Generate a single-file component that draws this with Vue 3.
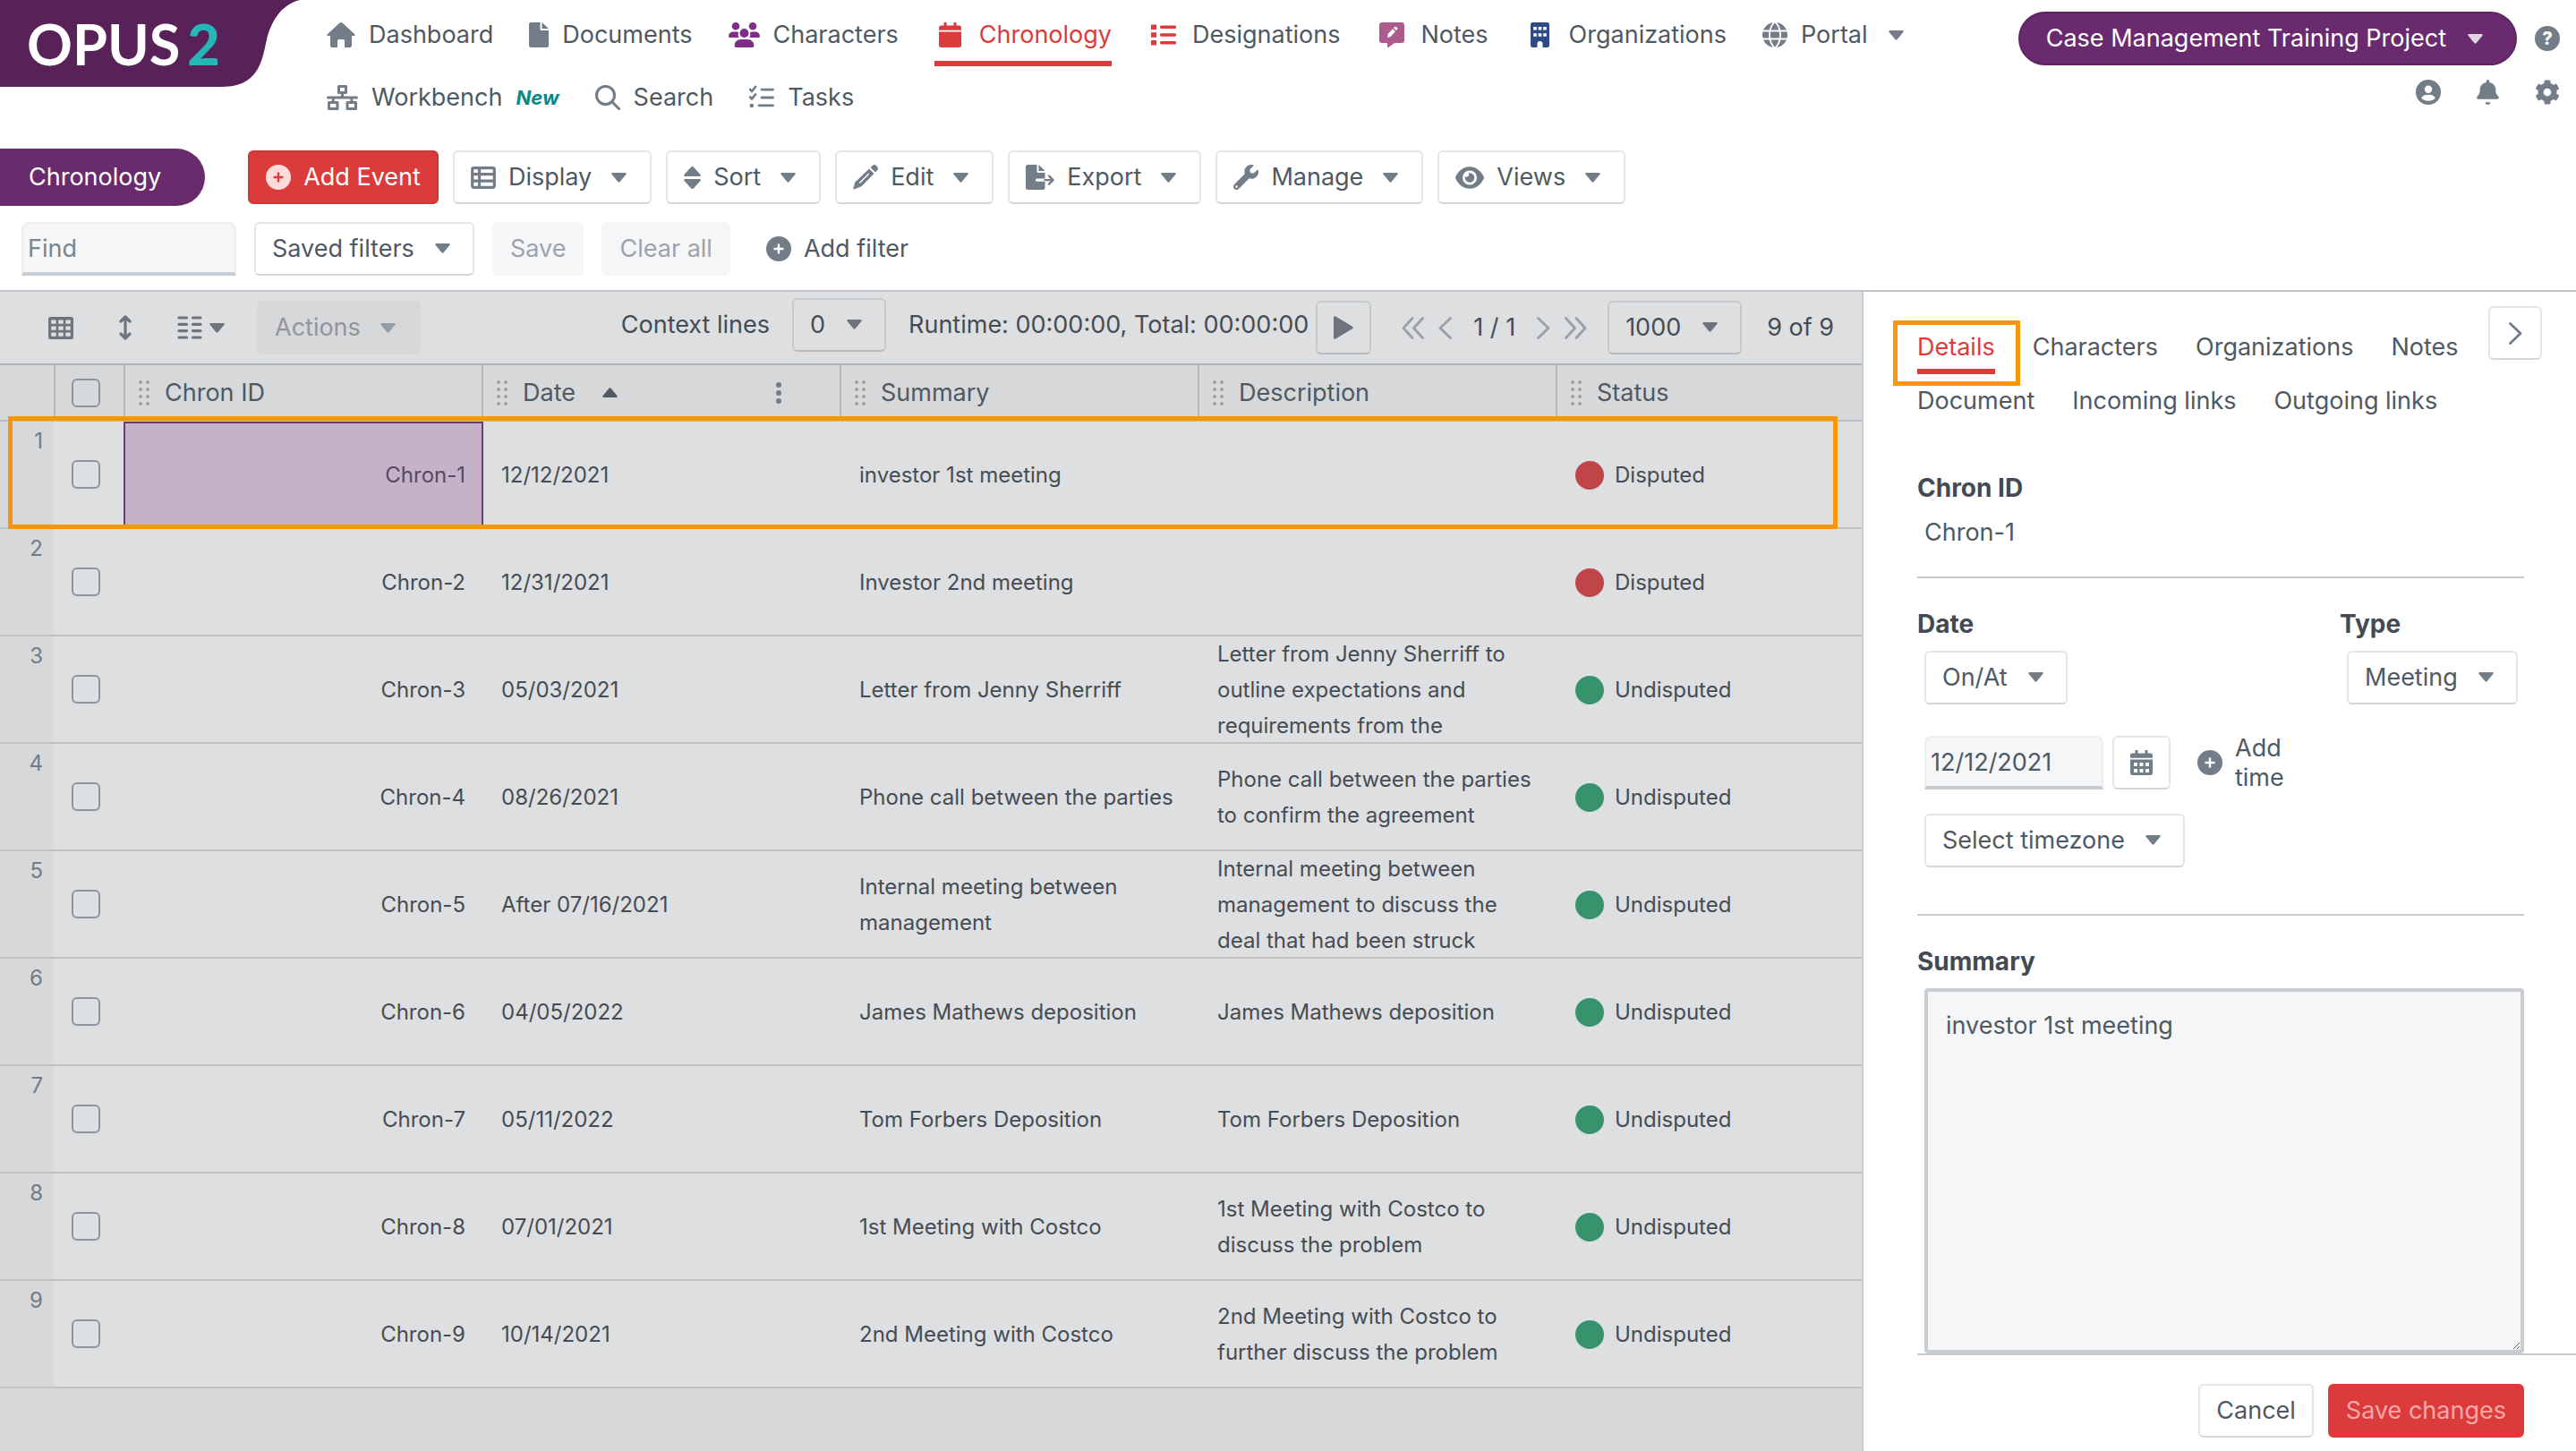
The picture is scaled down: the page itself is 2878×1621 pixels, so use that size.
<template>
	<div class="page">
		<header class="top">
			<a class="logo" href="#" aria-label="Opus 2">
				<svg class="logoShape" viewBox="0 0 335 97" preserveAspectRatio="none" aria-hidden="true">
					<path d="M0 0H335C314 5 303 24 298 44C293 66 290 97 248 97H0z" />
				</svg>
				<span class="logoText">OPUS<b>2</b></span>
			</a>

			<nav class="mainNav">
				<a v-for="item in navItems" :key="item.label" href="#" :class="['navItem', { active: item.active }]">
					<span :class="['navIcon', item.tone, { wide: item.wide }]"><Icon :name="item.icon" /></span>
					<span>{{ item.label }}</span>
					<em v-if="item.isNew">New</em>
					<Icon v-if="item.menu" name="caret" class="navCaret" />
				</a>
			</nav>

			<div class="account">
				<div class="accountRow">
					<button type="button" class="project">Case Management Training Project<Icon name="caret" /></button>
					<button type="button" class="help" aria-label="Help">?</button>
				</div>
				<div class="accountRow small">
					<button type="button" class="plain" aria-label="Account"><Icon name="user" /></button>
					<button type="button" class="plain" aria-label="Notifications"><Icon name="bell" /></button>
					<button type="button" class="plain" aria-label="Settings"><Icon name="gear" /></button>
				</div>
			</div>
		</header>

		<div class="toolbar">
			<h1 class="pageTitle">Chronology</h1>
			<button type="button" class="btn primary"><Icon name="plus" />Add Event</button>
			<button v-for="tool in tools" :key="tool.label" type="button" class="btn menu">
				<Icon :name="tool.icon" />{{ tool.label }}<Icon name="caret" class="caret" />
			</button>
		</div>

		<div class="filters">
			<input v-model="find" class="field find" type="text" placeholder="Find" aria-label="Find" />
			<span class="selectBox">
				<select aria-label="Saved filters"><option>Saved filters</option></select>
				<Icon name="caret" class="selectCaret" />
			</span>
			<button type="button" class="btn" disabled>Save</button>
			<button type="button" class="btn" disabled>Clear all</button>
			<button type="button" class="plain addFilter"><Icon name="plus" />Add filter</button>
		</div>

		<main class="content">
			<section class="list">
				<div class="listBar">
					<button type="button" class="plain" aria-label="Grid"><Icon name="grid" /></button>
					<button type="button" class="plain heightBtn" aria-label="Row height"><Icon name="updown" /></button>
					<button type="button" class="plain columnsBtn" aria-label="Columns"><Icon name="columns" /><Icon name="caret" /></button>
					<button type="button" class="btn menu actions" disabled>Actions<Icon name="caret" class="caret" /></button>
					<div class="barRight">
						<div class="runtime">
							<label for="context">Context lines</label>
							<span class="selectBox context">
								<select id="context"><option>0</option></select>
								<Icon name="caret" class="selectCaret" />
							</span>
							<span>Runtime: 00:00:00, Total: 00:00:00</span>
						</div>
						<button type="button" class="btn play" aria-label="Play"><Icon name="play" /></button>
						<div class="pager">
							<button type="button" class="plain" aria-label="First page"><Icon name="first" /></button>
							<button type="button" class="plain" aria-label="Previous page"><Icon name="prev" /></button>
							<span class="pageNo">1 / 1</span>
							<button type="button" class="plain" aria-label="Next page"><Icon name="next" /></button>
							<button type="button" class="plain" aria-label="Last page"><Icon name="last" /></button>
						</div>
						<span class="selectBox">
							<select aria-label="Rows per page"><option>1000</option></select>
							<Icon name="caret" class="selectCaret" />
						</span>
						<span class="total">9 of 9</span>
					</div>
				</div>

				<div class="tableWrap">
					<table>
						<colgroup>
							<col class="colNo" />
							<col class="colCheck" />
							<col v-for="n in 4" :key="n" class="colData" />
							<col />
						</colgroup>
						<thead>
							<tr>
								<th></th>
								<th><input type="checkbox" aria-label="Select all" /></th>
								<th v-for="col in columns" :key="col">
									<div class="head">
										<Icon name="handle" />
										<span>{{ col }}</span>
										<template v-if="col === 'Date'">
											<Icon name="asc" class="asc" />
											<button type="button" class="plain dots" aria-label="Column menu"><Icon name="dots" /></button>
										</template>
									</div>
								</th>
							</tr>
						</thead>
						<tbody>
							<tr v-for="(row, i) in rows" :key="i">
								<td class="no">{{ i + 1 }}</td>
								<td class="check"><input type="checkbox" :aria-label="`Select Chron-${i + 1}`" /></td>
								<td :class="['chron', { selected: i === 0 }]">Chron-{{ i + 1 }}</td>
								<td>{{ row.date }}</td>
								<td>{{ row.summary }}</td>
								<td>{{ row.description }}</td>
								<td>
									<span class="status">
										<i :class="{ disputed: row.disputed }"></i>{{ row.disputed ? 'Disputed' : 'Undisputed' }}
									</span>
								</td>
							</tr>
						</tbody>
					</table>
					<div class="rowMark"></div>
				</div>
			</section>

			<aside class="panel">
				<div class="panelTop">
					<nav class="tabs">
						<a v-for="tab in tabs" :key="tab" href="#" :class="{ active: tab === 'Details' }">{{ tab }}</a>
					</nav>
					<button type="button" class="btn collapse" aria-label="Collapse panel"><Icon name="next" /></button>
				</div>

				<form class="details" @submit.prevent>
					<section class="group">
						<h2>Chron ID</h2>
						<p>Chron-1</p>
					</section>

					<section class="group dates">
						<div class="dateCol">
							<h2>Date</h2>
							<span class="selectBox">
								<select aria-label="Date precision"><option>On/At</option></select>
								<Icon name="caret" class="selectCaret" />
							</span>
							<div class="dateRow">
								<input v-model="date" class="field" type="text" aria-label="Date" />
								<button type="button" class="btn cal" aria-label="Open calendar"><Icon name="calendarDays" /></button>
								<button type="button" class="plain addTime"><Icon name="plus" /><span>Add time</span></button>
							</div>
							<span class="selectBox">
								<select aria-label="Timezone"><option>Select timezone</option></select>
								<Icon name="caret" class="selectCaret" />
							</span>
						</div>
						<div>
							<h2><label for="type">Type</label></h2>
							<span class="selectBox">
								<select id="type"><option>Meeting</option></select>
								<Icon name="caret" class="selectCaret" />
							</span>
						</div>
					</section>

					<section class="group summary">
						<h2><label for="summary">Summary</label></h2>
						<textarea id="summary" v-model="summary"></textarea>
					</section>
				</form>

				<footer class="panelFoot">
					<button type="button" class="btn">Cancel</button>
					<button type="button" class="btn primary faded">Save changes</button>
				</footer>
			</aside>
		</main>
	</div>
</template>

<script setup>
import { h, ref } from 'vue'

const dot = (x, y, r) => `M${x - r} ${y}a${r} ${r} 0 1 0 ${2 * r} 0a${r} ${r} 0 1 0 ${-2 * r} 0z`
const box = (x, y, w, hgt) => `M${x} ${y}h${w}v${hgt}h${-w}z`

// w, h: drawn size / fill: solid shape / line: stroked shape / cut: white lines
const icons = {
	home: { w: 32, h: 28, fill: 'M16 0Q17 0 18 1L31 13Q32.5 15 30.5 15H28V26a2 2 0 0 1-2 2H20V21q0-2-2-2h-4q-2 0-2 2v7H6a2 2 0 0 1-2-2V15H1.5Q-.5 15 1 13L14 1Q15 0 16 0z' },
	file: { w: 22, h: 28, fill: 'M2.5 0H12.5V7.5a1.5 1.5 0 0 0 1.5 1.5H22V25.5a2.5 2.5 0 0 1-2.5 2.5h-17A2.5 2.5 0 0 1 0 25.5v-23A2.5 2.5 0 0 1 2.5 0zM14.5 0L22 7H14.5z' },
	users: { w: 35, h: 28, fill: dot(8, 4.3, 4.3) + dot(27, 4.3, 4.3) + dot(17.5, 12, 5) + 'M0 15.5a5 5 0 0 1 5-5h4q1 0 2 .6q-1 3 .4 5.9H1.5q-1.5 0-1.5-1.5zM35 15.5a5 5 0 0 0-5-5h-4q-1 0-2 .6q1 3-.4 5.9h9.9q1.5 0 1.5-1.5zM6.5 26a7 7 0 0 1 7-7h8a7 7 0 0 1 7 7q0 2-2 2h-18q-2 0-2-2z' },
	calendar: { w: 25, h: 28, fill: 'M5.5 0h3v3.5h8V0h3v3.5h3A2.5 2.5 0 0 1 25 6v2.8H0V6a2.5 2.5 0 0 1 2.5-2.5h3zM0 10.5h25v15a2.5 2.5 0 0 1-2.5 2.5h-20A2.5 2.5 0 0 1 0 25.5z' },
	calendarDays: { w: 25, h: 28, fill: 'M5.5 0h3v3.5h8V0h3v3.5h3A2.5 2.5 0 0 1 25 6v2.8H0V6a2.5 2.5 0 0 1 2.5-2.5h3zM0 10.5h25v15a2.5 2.5 0 0 1-2.5 2.5h-20A2.5 2.5 0 0 1 0 25.5z' + [4, 10.5, 17].map((x) => box(x, 14, 4, 4) + box(x, 21, 4, 4)).join('') },
	list: { w: 28, h: 28, fill: box(0, 2.5, 6, 5.5) + box(0, 11.2, 6, 5.5) + box(0, 20, 6, 5.5), line: 'M11.5 5.2H26.5M11.5 14H26.5M11.5 22.8H26.5', sw: 3.4 },
	tasks: { w: 28, h: 28, fill: dot(2.8, 23, 2.3), line: 'M1 5l2 2L7 2M1 13.5l2 2L7 10.5M14 5.2H26.5M14 14H26.5M11 22.8H26.5', sw: 2.8 },
	note: { w: 28, h: 28, fill: 'M3 0H25a3 3 0 0 1 3 3V20a3 3 0 0 1-3 3H17L10.5 27.8Q9 28.5 9 27V23H3a3 3 0 0 1-3-3V3a3 3 0 0 1 3-3zM9 17L12.5 16L18 10L15 7.2L9.8 12.8zM16 6.2L19 9L20 7.8Q20.8 6.5 19.8 5.6T17.2 5z' },
	building: { w: 21, h: 28, fill: 'M2.5 0h16A2.5 2.5 0 0 1 21 2.5v23a2.5 2.5 0 0 1-2.5 2.5H13.5v-4a3 3 0 0 0-6 0v4h-5A2.5 2.5 0 0 1 0 25.5v-23A2.5 2.5 0 0 1 2.5 0z' + [3.2, 8.7, 14.2].map((x) => box(x, 5, 3.6, 3.6) + box(x, 12.2, 3.6, 3.6)).join('') },
	globe: { w: 28, h: 28, fill: dot(14, 14, 14), cut: 'M0 9.5H28M0 18.5H28M14 -1C6 7 6 21 14 29M14 -1C22 7 22 21 14 29' },
	sitemap: { w: 35, h: 28, line: 'M13.5 1.5h8v7h-8zM2.5 19.5h9.5v7H2.5zM23 19.5h9.5v7H23zM17.5 8.5V14M1.5 14H33.5M7.2 14V19.5M27.8 14V19.5', sw: 3 },
	search: { w: 28, h: 28, line: 'M21.5 11.5a10 10 0 1 1-20 0a10 10 0 1 1 20 0zM18.8 18.8L26.5 26.5', sw: 3 },
	caret: { w: 17, h: 11, fill: 'M1.5 0H15.5Q17.5 .3 16.3 2L9.7 10Q8.5 11.4 7.3 10L.7 2Q-.5 .3 1.5 0z' },
	plus: { w: 28, h: 28, fill: dot(14, 14, 14) + 'M12.8 8.5h2.4v4.3h4.3v2.4h-4.3v4.3h-2.4v-4.3H8.5v-2.4h4.3z' },
	display: { w: 28, h: 25, line: 'M3.5 1.7h21q1.8 0 1.8 1.8v18q0 1.8-1.8 1.8h-21q-1.8 0-1.8-1.8v-18q0-1.8 1.8-1.8zM9.5 2V23M2 8.7H26M2 16.2H26', sw: 3.2 },
	sort: { w: 19, h: 25, fill: 'M9.5 0Q10.5 0 11 .8L18.5 9Q19.5 11 17.5 11H1.5Q-.5 11 .5 9L8 .8Q8.5 0 9.5 0zM9.5 25Q10.5 25 11 24.2L18.5 16Q19.5 14 17.5 14H1.5Q-.5 14 .5 16L8 24.2Q8.5 25 9.5 25z' },
	pencil: { w: 28, h: 28, fill: 'M19.5 3L22 .9Q24 -.7 26 1L27.2 2.4Q28.8 4.5 27 6.3L25 8.5zM18 4.6L23.5 10.1L9.5 24.2L1.2 27.6Q0 28 .3 26.6L2.6 18.8L4 18zM17.2 9.6L6.8 20L7.8 21L18.2 10.6z' },
	fileExport: { w: 32, h: 28, fill: 'M2.5 0H12.5V7.5a1.5 1.5 0 0 0 1.5 1.5H21.5V15.5H12.5a1.6 1.6 0 0 0 0 3.2h9V25.5a2.5 2.5 0 0 1-2.5 2.5H2.5A2.5 2.5 0 0 1 0 25.5v-23A2.5 2.5 0 0 1 2.5 0zM14.5 0L21.5 7H14.5z', line: 'M21.5 17.1H30M26 12.5L30.5 17.1L26 21.7', sw: 2.4 },
	wrench: { w: 28, h: 28, box: '0 0 512 512', fill: 'M507.7 109.1c-2.2-9-13.5-12.1-20.1-5.5l-74.4 74.4-67.9-11.3-11.3-67.9 74.4-74.4c6.6-6.6 3.4-17.9-5.7-20.2-47.4-11.7-99.6.9-136.6 37.9-39.6 39.6-50.5 97.1-34 147.2L18.7 402.8c-25 25-25 65.5 0 90.5 25 25 65.5 25 90.5 0l213.2-213.2c50.1 16.7 107.5 5.7 147.4-34.2 37.1-37.1 49.7-89.3 37.9-136.8zM64 472c-13.2 0-24-10.8-24-24 0-13.3 10.8-24 24-24s24 10.7 24 24c0 13.2-10.8 24-24 24z' },
	eye: { w: 32, h: 25, box: '0 32 576 448', fill: 'M572.5 241.4C518.3 115.6 410.9 34 288 34S57.7 115.6 3.5 241.4a32.4 32.4 0 0 0 0 29.2C57.7 396.4 165.1 478 288 478s230.3-81.6 284.5-207.4a32.4 32.4 0 0 0 0-29.2zM288 400a144 144 0 1 1 144-144 144 144 0 0 1-144 144zm0-240a95.3 95.3 0 0 0-25.3 3.8 47.9 47.9 0 0 1-66.9 66.9A95.8 95.8 0 1 0 288 160z' },
	user: { w: 28, h: 28, fill: dot(14, 14, 14) + dot(14, 10.8, 4.2) + 'M6.2 20.5Q8 17 11.5 17h5Q20 17 21.8 20.5A10.8 10.8 0 0 1 6.2 20.5z' },
	bell: { w: 25, h: 28, box: '0 0 448 512', fill: 'M224 512c30 0 50-20 55-50H169c5 30 25 50 55 50zm215.4-169.7c-19.3-20.8-55.5-42-55.5-144.3 0-77.7-54.5-129.9-127.9-145.2V32c0-17.7-14.3-32-32-32s-32 14.3-32 32v20.8C118.6 68.1 64.1 120.3 64.1 198c0 102.3-36.2 123.5-55.5 144.3-6 6.5-8.7 14.2-8.6 21.7.1 16.4 13 32 32.1 32h383.8c19.1 0 32-15.6 32.1-32 0-7.5-2.6-15.3-8.6-21.7z' },
	gear: { w: 28, h: 28, box: '0 0 512 512', fill: 'M487.4 315.7l-42.6-24.6c4.3-23.2 4.3-47 0-70.2l42.6-24.6c4.9-2.8 7.1-8.6 5.5-14-11.1-35.6-30-67.8-54.7-94.6-3.8-4.1-10-5.1-14.8-2.3L380.8 110c-17.9-15.4-38.5-27.3-60.8-35.1V25.8c0-5.6-3.9-10.5-9.4-11.7-36.7-8.2-74.3-7.8-109.2 0-5.5 1.2-9.4 6.1-9.4 11.7V75c-22.2 7.9-42.8 19.8-60.8 35.1L88.7 85.5c-4.9-2.8-11-1.9-14.8 2.3-24.7 26.7-43.6 58.9-54.7 94.6-1.7 5.4.6 11.2 5.5 14L67.3 221c-4.3 23.2-4.3 47 0 70.2l-42.6 24.6c-4.9 2.8-7.1 8.6-5.5 14 11.1 35.6 30 67.8 54.7 94.6 3.8 4.1 10 5.1 14.8 2.3l42.6-24.6c17.9 15.4 38.5 27.3 60.8 35.1v49.2c0 5.6 3.9 10.5 9.4 11.7 36.7 8.2 74.3 7.8 109.2 0 5.5-1.2 9.4-6.1 9.4-11.7v-49.2c22.2-7.9 42.8-19.8 60.8-35.1l42.6 24.6c4.9 2.8 11 1.9 14.8-2.3 24.7-26.7 43.6-58.9 54.7-94.6 1.5-5.5-.7-11.3-5.6-14.1zM256 336c-44.1 0-80-35.9-80-80s35.9-80 80-80 80 35.9 80 80-35.9 80-80 80z' },
	grid: { w: 28, h: 25, fill: 'M2.5 0h23A2.5 2.5 0 0 1 28 2.5v20a2.5 2.5 0 0 1-2.5 2.5h-23A2.5 2.5 0 0 1 0 22.5v-20A2.5 2.5 0 0 1 2.5 0z' + [3.2, 11.3, 19.4].map((x) => box(x, 3.4, 5.4, 4.4) + box(x, 10.4, 5.4, 4.4) + box(x, 17.4, 5.4, 4.4)).join('') },
	updown: { w: 14, h: 28, line: 'M7 2V26M2 7L7 2L12 7M2 21L7 26L12 21', sw: 3.2 },
	columns: { w: 28, h: 26, line: [2, 9.3, 16.6, 24].map((y) => `M2 ${y}H10.5M17.5 ${y}H26`).join(''), sw: 3.2 },
	play: { w: 22, h: 26, fill: 'M0 1.8Q0 -.6 2.2 .6L21 11.8Q22.4 13 21 14.2L2.2 25.4Q0 26.6 0 24.2z' },
	first: { w: 25, h: 25, line: 'M12 1.5L2 12.5L12 23.5M23.5 1.5L13.5 12.5L23.5 23.5', sw: 2.8 },
	prev: { w: 15, h: 25, line: 'M13.5 1.5L2 12.5L13.5 23.5', sw: 2.8 },
	next: { w: 15, h: 25, line: 'M1.5 1.5L13 12.5L1.5 23.5', sw: 2.8 },
	last: { w: 25, h: 25, line: 'M1.5 1.5L11.5 12.5L1.5 23.5M13 1.5L23 12.5L13 23.5', sw: 2.8 },
	handle: { w: 12, h: 28, fill: [2, 10, 18, 26].map((y) => dot(2, y, 2) + dot(10, y, 2)).join('') },
	asc: { w: 17, h: 11, fill: 'M1.5 11H15.5Q17.5 10.7 16.3 9L9.7 1Q8.5 -.4 7.3 1L.7 9Q-.5 10.7 1.5 11z' },
	dots: { w: 6, h: 24, fill: dot(3, 3, 3) + dot(3, 12, 3) + dot(3, 21, 3) },
}

const Icon = ({ name }) => {
	const icon = icons[name]
	return h('svg', { class: 'icon', width: icon.w, height: icon.h, viewBox: icon.box || `0 0 ${icon.w} ${icon.h}`, 'aria-hidden': 'true' }, [
		icon.fill && h('path', { d: icon.fill, fill: 'currentColor', 'fill-rule': 'evenodd' }),
		icon.line && h('path', { d: icon.line, fill: 'none', stroke: 'currentColor', 'stroke-width': icon.sw, 'stroke-linecap': 'round', 'stroke-linejoin': 'round' }),
		icon.cut && h('path', { d: icon.cut, fill: 'none', stroke: '#fff', 'stroke-width': 1.8 }),
	])
}
Icon.props = ['name']

const navItems = [
	{ label: 'Dashboard', icon: 'home' },
	{ label: 'Documents', icon: 'file' },
	{ label: 'Characters', icon: 'users', tone: 'purple' },
	{ label: 'Chronology', icon: 'calendar', tone: 'red', wide: true, active: true },
	{ label: 'Designations', icon: 'list', tone: 'red', wide: true },
	{ label: 'Notes', icon: 'note', tone: 'pink', wide: true },
	{ label: 'Organizations', icon: 'building', tone: 'blue', wide: true },
	{ label: 'Portal', icon: 'globe', menu: true },
	{ label: 'Workbench', icon: 'sitemap', isNew: true },
	{ label: 'Search', icon: 'search' },
	{ label: 'Tasks', icon: 'tasks' },
]

const tools = [
	{ label: 'Display', icon: 'display' },
	{ label: 'Sort', icon: 'sort' },
	{ label: 'Edit', icon: 'pencil' },
	{ label: 'Export', icon: 'fileExport' },
	{ label: 'Manage', icon: 'wrench' },
	{ label: 'Views', icon: 'eye' },
]

const columns = ['Chron ID', 'Date', 'Summary', 'Description', 'Status']

const rows = [
	{ date: '12/12/2021', summary: 'investor 1st meeting', description: '', disputed: true },
	{ date: '12/31/2021', summary: 'Investor 2nd meeting', description: '', disputed: true },
	{ date: '05/03/2021', summary: 'Letter from Jenny Sherriff', description: 'Letter from Jenny Sherriff to outline expectations and requirements from the' },
	{ date: '08/26/2021', summary: 'Phone call between the parties', description: 'Phone call between the parties to confirm the agreement' },
	{ date: 'After 07/16/2021', summary: 'Internal meeting between management', description: 'Internal meeting between management to discuss the deal that had been struck' },
	{ date: '04/05/2022', summary: 'James Mathews deposition', description: 'James Mathews deposition' },
	{ date: '05/11/2022', summary: 'Tom Forbers Deposition', description: 'Tom Forbers Deposition' },
	{ date: '07/01/2021', summary: '1st Meeting with Costco', description: '1st Meeting with Costco to discuss the problem' },
	{ date: '10/14/2021', summary: '2nd Meeting with Costco', description: '2nd Meeting with Costco to further discuss the problem' },
]

const tabs = ['Details', 'Characters', 'Organizations', 'Notes', 'Document', 'Incoming links', 'Outgoing links']

const find = ref('')
const date = ref('12/12/2021')
const summary = ref('investor 1st meeting')
</script>

<style>
body {
	margin: 0;
	background: #fff;
}
</style>

<style scoped>
.page {
	display: flex;
	flex-direction: column;
	min-height: 100vh;
	font-family: Inter, "Noto Sans", sans-serif;
	font-size: 27px;
	line-height: 40px;
	color: #4f5963;
}

.page * {
	box-sizing: border-box;
}

button,
input,
select,
textarea {
	margin: 0;
	font: inherit;
	color: inherit;
}

a {
	color: inherit;
	text-decoration: none;
}

h1,
h2,
p {
	margin: 0;
}

.icon {
	display: block;
	flex: none;
}

/* header */
.top {
	display: flex;
	align-items: flex-start;
	padding-right: 18px;
}

.logo {
	position: relative;
	flex: none;
	width: 335px;
	height: 97px;
	padding-left: 30px;
}

.logoShape {
	position: absolute;
	inset: 0;
	width: 100%;
	height: 100%;
	fill: #582157;
}

.logoText {
	position: relative;
	font-family: Lato, sans-serif;
	font-size: 63px;
	font-weight: 700;
	line-height: 97px;
	color: #fff;
}

.logoText b {
	margin-left: 8px;
	color: #27b5b6;
}

.mainNav {
	display: flex;
	flex: 1;
	flex-wrap: wrap;
	column-gap: 40px;
	padding: 4px 40px 0 30px;
}

.navItem {
	display: flex;
	align-items: center;
	gap: 15px;
	height: 70px;
}

.navItem.active {
	color: #dc3b3b;
	box-shadow: inset 0 -6px #dc3b3b;
}

.navIcon {
	display: flex;
	justify-content: center;
	color: #737d87;
}

.navIcon.wide {
	width: 35px;
}

.navIcon.purple {
	color: #7d2f86;
}

.navIcon.red {
	color: #dc3b3b;
}

.navIcon.pink {
	color: #ad5b8d;
}

.navIcon.blue {
	color: #2f4b87;
}

.navItem em {
	font-size: 22px;
	font-weight: 700;
	color: #06898c;
}

.navCaret {
	margin-left: 8px;
	color: #737d87;
}

.account {
	padding-top: 13px;
}

.accountRow {
	display: flex;
	align-items: center;
	justify-content: flex-end;
	gap: 20px;
}

.accountRow.small {
	gap: 40px;
	margin-top: 16px;
}

.project {
	display: flex;
	align-items: center;
	gap: 24px;
	height: 60px;
	padding: 0 36px 0 29px;
	border: 2px solid #5d2461;
	border-radius: 30px;
	background: #6a2b6e;
	color: #fff;
}

.project .icon {
	opacity: 0.8;
}

.help {
	width: 28px;
	height: 28px;
	padding: 0;
	border: 0;
	border-radius: 50%;
	background: #737d87;
	font-size: 20px;
	font-weight: 800;
	line-height: 28px;
	color: #fff;
}

.plain {
	display: flex;
	align-items: center;
	padding: 0;
	border: 0;
	background: none;
}

.plain .icon,
.btn .icon {
	color: #737d87;
}

/* buttons and fields */
.btn {
	display: flex;
	flex: none;
	align-items: center;
	justify-content: center;
	gap: 14px;
	height: 60px;
	padding: 0 18px;
	border: 2px solid #e4e5e7;
	border-bottom-color: #d4d6d8;
	border-radius: 6px;
	background: #fff;
	white-space: nowrap;
}

.btn.menu {
	padding-right: 26px;
}

.btn .caret {
	margin-left: 8px;
}

.btn.primary {
	border-color: #c93737;
	background: #dc3b3b;
	color: #fff;
}

.btn.primary .icon {
	color: #fbdcdc;
}

.btn.primary.faded {
	border-color: #dc3b3b;
	color: #f5a9a9;
}

.btn:disabled {
	border-color: #f5f6f8;
	background: #f5f6f8;
	color: #9ba3ac;
}

.field {
	height: 60px;
	padding: 0 5px;
	border: 2px solid #eceef0;
	border-bottom: 4px solid #c8cdd2;
	border-radius: 8px 8px 0 0;
	background: #f5f6f8;
	outline: 0;
}

.field::placeholder {
	color: #7a848e;
	opacity: 1;
}

.selectBox {
	position: relative;
	display: inline-flex;
	flex: none;
}

.selectBox select {
	height: 60px;
	padding: 0 65px 0 18px;
	border: 2px solid #e4e5e7;
	border-bottom-color: #d4d6d8;
	border-radius: 6px;
	background: none;
	appearance: none;
}

.selectCaret {
	position: absolute;
	top: 24px;
	right: 27px;
	color: #737d87;
	pointer-events: none;
}

.toolbar {
	display: flex;
	align-items: center;
	gap: 16px;
	margin-top: 22px;
}

.pageTitle {
	margin-right: 32px;
	padding: 12px 49px 12px 32px;
	border-radius: 0 32px 32px 0;
	background: #6a2b6e;
	font-size: 27px;
	font-weight: 400;
	color: #fff;
}

.filters {
	display: flex;
	align-items: center;
	gap: 20px;
	padding: 18px 24px 16px;
}

.find {
	width: 240px;
}

.addFilter {
	gap: 14px;
	margin-left: 20px;
}

/* list */
.content {
	display: grid;
	flex: 1;
	grid-template-columns: minmax(0, 1fr) 798px;
	border-top: 2px solid #bfc5ca;
}

.list {
	background: #d6d8da;
	color: #464c54;
}

.listBar {
	display: flex;
	align-items: center;
	height: 82px;
	padding: 0 31px 0 54px;
	border-bottom: 2px solid #aeb4b9;
	background: #dddfe0;
}

.listBar .icon {
	color: #6d747d;
}

.heightBtn {
	margin-left: 51px;
}

.columnsBtn {
	gap: 8px;
	margin-left: 51px;
}

.btn.actions {
	margin-left: 36px;
	border-color: #d6d8da;
	background: #d6d8da;
	color: #8f969f;
}

.listBar .actions .icon {
	color: #949ca5;
}

.barRight {
	display: flex;
	align-items: center;
	margin-left: auto;
}

.runtime {
	display: flex;
	align-items: center;
	margin-bottom: 6px;
}

.list .selectBox select,
.btn.play {
	border-color: #c6c9cb;
	border-bottom-color: #b9bcbf;
	background: none;
}

.context {
	margin: 0 25px;
}

.btn.play {
	width: 62px;
	margin-left: 8px;
	padding: 0;
}

.pager {
	display: flex;
	align-items: center;
	margin: 0 23px 0 34px;
}

.pager .plain + .plain,
.pageNo + .plain {
	margin-left: 16px;
}

.pager .icon {
	color: #9aa0a8;
}

.pageNo {
	margin: 0 8px 0 24px;
}

.total {
	margin-left: 28px;
}

.tableWrap {
	position: relative;
}

table {
	width: 100%;
	border-spacing: 0;
	table-layout: fixed;
}

.colNo {
	width: 60px;
}

.colCheck {
	width: 78px;
}

.colData {
	width: 400px;
}

th {
	height: 63px;
	padding: 0;
	border-bottom: 2px solid #b9bdc0;
	border-left: 2px solid #b5b9bc;
	font-weight: 400;
	text-align: left;
	color: #4f5963;
}

th:first-child {
	border-left: 0;
}

.head {
	display: flex;
	align-items: center;
	padding: 0 65px 0 15px;
}

.head span {
	margin-left: 17px;
}

.head > .icon:first-child {
	color: #9ba0a5;
}

.asc {
	margin-left: 30px;
}

.dots {
	margin-left: auto;
}

td {
	height: 120px;
	padding: 0 20px 0 22px;
	background: #dddfe0;
	box-shadow: inset 0 -2px #bfc1c3;
	font-size: 24px;
	line-height: 40px;
}

.no {
	padding: 2px 12px 0 0;
	background: #d6d8da;
	text-align: right;
	vertical-align: top;
	color: #737b85;
}

th input,
.check input {
	display: block;
	width: 32px;
	height: 32px;
	margin: 0 0 0 20px;
	border: 2px solid #8c949d;
	border-radius: 6px;
	appearance: none;
}

th input {
	margin-left: 18px;
}

.check {
	padding: 0 0 2px;
}

.chron {
	padding: 0 18px 0 0;
	text-align: right;
}

.chron.selected {
	position: relative;
	background: #c4b2c8;
	box-shadow: inset 2px 2px #6c3d79, inset 0 -2px #6c3d79, 2px 0 #6c3d79;
	color: #5b4763;
}

.status {
	display: flex;
	align-items: center;
	gap: 12px;
}

.status i {
	width: 32px;
	height: 32px;
	border-radius: 50%;
	background: #37936b;
}

.status i.disputed {
	background: #c04548;
}

/* outline round the first row */
.rowMark {
	position: absolute;
	top: 57px;
	right: 27px;
	left: 9px;
	height: 126px;
	border: 5px solid #fd950c;
	pointer-events: none;
}

/* details panel */
.panel {
	display: flex;
	flex-direction: column;
	padding: 16px 0 0 60px;
	border-left: 2px solid #c8ccd0;
}

.panelTop {
	display: flex;
	align-items: flex-start;
	padding-right: 38px;
}

.tabs {
	display: flex;
	flex: 1;
	flex-wrap: wrap;
	column-gap: 42px;
	padding-top: 16px;
}

.tabs a {
	position: relative;
	height: 60px;
	line-height: 60px;
}

.tabs .active {
	color: #dc3b3b;
	box-shadow: inset 0 -6px #dc3b3b;
}

.tabs .active::after {
	position: absolute;
	inset: 0 -28px -13px -27px;
	border: 5px solid #fd950c;
	content: "";
}

.btn.collapse {
	width: 60px;
	padding: 0;
}

.details {
	display: flex;
	flex: 1;
	flex-direction: column;
	padding: 16px 58px 0 0;
}

.group {
	padding: 31px 0 29px;
	border-bottom: 2px solid #c8ccd0;
}

.group h2 {
	margin-bottom: 10px;
	font-size: 28px;
	font-weight: 700;
	color: #434a52;
}

.group p {
	padding-left: 8px;
}

.dates {
	display: flex;
	justify-content: space-between;
	padding-right: 7px;
	padding-bottom: 52px;
}

.dates .selectBox {
	margin-left: 8px;
}

.dateCol .selectBox {
	display: flex;
	width: fit-content;
}

.dateRow {
	display: flex;
	align-items: center;
	margin: 32px 0 24px 8px;
}

.dateRow .field {
	width: 200px;
}

.btn.cal {
	width: 65px;
	margin-left: 10px;
	padding: 0;
}

.addTime {
	gap: 14px;
	margin-left: 30px;
	line-height: 33px;
	text-align: left;
}

.addTime span {
	width: 64px;
}

.summary {
	display: flex;
	flex: 1;
	flex-direction: column;
	padding-bottom: 0;
	border-bottom: 0;
}

textarea {
	flex: 1;
	min-height: 200px;
	margin-left: 8px;
	padding: 18px 20px;
	border: 4px solid #c8cdd2;
	border-radius: 4px;
	background: #f5f6f8;
	outline: 0;
}

.panelFoot {
	display: flex;
	justify-content: flex-end;
	gap: 16px;
	padding: 32px 58px 15px 0;
	border-top: 2px solid #c8c9cb;
}
</style>
